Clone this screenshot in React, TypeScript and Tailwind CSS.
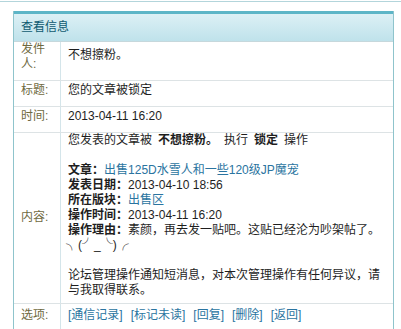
import React from "react";

const linkCls = "text-[#2a74a0]";

function N({ children }: { children: React.ReactNode }) {
  return <span className="text-[12px]">{children}</span>;
}

function Label({ children, className = "" }: { children: React.ReactNode; className?: string }) {
  return (
    <div className={`w-[47px] shrink-0 border-r border-[#d4e5ea] pl-[7px] pr-[2px] text-[#6f6a3f] ${className}`}>
      {children}
    </div>
  );
}

export default function App() {
  return (
    <div className="h-[329px] w-[401px] overflow-hidden bg-white font-['Liberation_Sans','Noto_Sans_CJK_SC',sans-serif] text-[12px] leading-[15px] text-[#1e1e1e]">
      <div className="mt-px border-t border-[#b3d5db]" />
      <div className="ml-[13px] mt-[9px] w-[381px] border-x border-[#8fc4cc]">
        <div className="h-[3px] bg-[#5db5c7]" />
        <div className="h-[28px] border-b border-[#c6d8dc] bg-gradient-to-b from-[#dcf0f5] to-[#bfe2eb] pl-[7px] pt-[6px] text-[#0f5a70]">
          查看信息
        </div>

        <div className="flex h-[39px] border-b border-[#dde3e5]">
          <Label>发件人:</Label>
          <div className="pl-[7px] pt-[6px]">不想擦粉。</div>
        </div>

        <div className="flex h-[26px] border-b border-[#dde3e5]">
          <Label className="pt-[2px]">标题:</Label>
          <div className="pl-[7px] pt-[2px]">您的文章被锁定</div>
        </div>

        <div className="flex h-[26px] border-b border-[#dde3e5]">
          <Label className="pt-[2px]">时间:</Label>
          <div className="pl-[7px] pt-[2px]">
            <N>2013-04-11 16:20</N>
          </div>
        </div>

        <div className="flex h-[171px] border-b border-[#dde3e5]">
          <Label className="flex items-center pb-[2px]">内容:</Label>
          <div className="flex-1 pl-[7px] pr-[7px]">
            <div>
              您发表的文章被{"\u2002"}
              <b>不想擦粉。</b>
              {"\u2002"}执行{"\u2002"}
              <b>锁定</b>
              {"\u2002"}操作
            </div>
            <div className="h-[15px]" />
            <div>
              <b>文章：</b>
              <span className={linkCls}>
                出售<N>125D</N>水雪人和一些<N>120</N>级<N>JP</N>魔宠
              </span>
            </div>
            <div>
              <b>发表日期：</b>
              <N>2013-04-10 18:56</N>
            </div>
            <div>
              <b>所在版块：</b>
              <span className={linkCls}>出售区</span>
            </div>
            <div>
              <b>操作时间：</b>
              <N>2013-04-11 16:20</N>
            </div>
            <div>
              <b>操作理由：</b>素颜，再去发一贴吧。这贴已经沦为吵架帖了。
            </div>
            <div className="-ml-[2px] text-[12px]">╮(╯_╰)╭</div>
            <div className="h-[15px]" />
            <div>论坛管理操作通知短消息，对本次管理操作有任何异议，请与我取得联系。</div>
          </div>
        </div>

        <div className="flex h-[30px]">
          <Label className="pt-[4px]">选项:</Label>
          <div className={`flex gap-[8px] pl-[7px] pt-[4px] ${linkCls}`}>
            <span>[通信记录]</span>
            <span>[标记未读]</span>
            <span>[回复]</span>
            <span>[删除]</span>
            <span>[返回]</span>
          </div>
        </div>
      </div>
    </div>
  );
}
